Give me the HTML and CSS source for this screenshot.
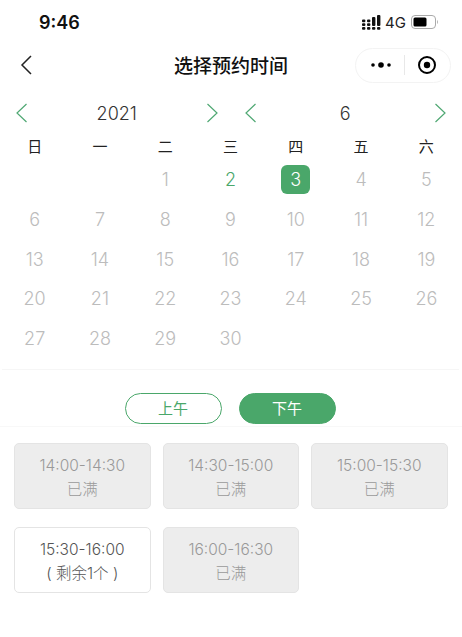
FILE: index.html
```html
<!DOCTYPE html>
<html lang="zh-CN">
<head>
  <meta charset="UTF-8" />
  <meta name="viewport" content="width=device-width, initial-scale=1.0"/>
  <title>选择预约时间</title>
  <link rel="stylesheet" href="styles.css">
</head>
<body>
  <div class="status-bar">
    <div class="time">9:46</div>
    <div class="status-icons">
      <svg class="signal" width="19" height="15" viewBox="0 0 19 15" fill="#111">
        <rect x="0" y="4.5" width="3.4" height="2.8" rx="1"/><rect x="0" y="8.2" width="3.4" height="2.8" rx="1"/><rect x="0" y="12" width="3.4" height="2.8" rx="1"/>
        <rect x="5" y="4.5" width="3.4" height="2.8" rx="1"/><rect x="5" y="8.2" width="3.4" height="2.8" rx="1"/><rect x="5" y="12" width="3.4" height="2.8" rx="1"/>
        <rect x="10" y="2" width="3.4" height="9" rx="1"/><rect x="10" y="12" width="3.4" height="2.8" rx="1"/>
        <rect x="15" y="0" width="3.4" height="11" rx="1"/><rect x="15" y="12" width="3.4" height="2.8" rx="1"/>
      </svg>
      <span class="network">4G</span>
      <svg class="battery" width="28" height="14" viewBox="0 0 28 14">
        <rect x="0.5" y="0.5" width="24" height="13" rx="3.5" fill="none" stroke="#aaa"/>
        <rect x="2.5" y="2.5" width="13" height="9" rx="1.5" fill="#000"/>
        <path d="M26 5 C27.2 5.5 27.2 8.5 26 9 Z" fill="#aaa"/>
      </svg>
    </div>
  </div>

  <div class="nav-bar">
    <svg class="back" width="12" height="20" viewBox="0 0 12 20" fill="none" stroke="#222" stroke-width="1.5">
      <path d="M11 1 L2 10 L11 19"/>
    </svg>
    <div class="nav-title">选择预约时间</div>
    <div class="capsule">
      <svg width="22" height="8" viewBox="0 0 22 8" fill="#000">
        <circle cx="3" cy="4" r="1.8"/><circle cx="11" cy="4" r="2.8"/><circle cx="19" cy="4" r="1.8"/>
      </svg>
      <div class="capsule-line"></div>
      <svg width="20" height="20" viewBox="0 0 20 20">
        <circle cx="10" cy="10" r="8" fill="none" stroke="#000" stroke-width="2"/>
        <circle cx="10" cy="10" r="3.2" fill="#000"/>
      </svg>
    </div>
  </div>

  <div class="picker">
    <div class="picker-part">
      <svg class="arrow" width="11" height="20" viewBox="0 0 11 20"><path d="M10.5 1 L1 10 L10.5 19"/></svg>
      <span>2021</span>
      <svg class="arrow" width="11" height="20" viewBox="0 0 11 20"><path d="M0.5 1 L10 10 L0.5 19"/></svg>
    </div>
    <div class="picker-part">
      <svg class="arrow" width="11" height="20" viewBox="0 0 11 20"><path d="M10.5 1 L1 10 L10.5 19"/></svg>
      <span>6</span>
      <svg class="arrow" width="11" height="20" viewBox="0 0 11 20"><path d="M0.5 1 L10 10 L0.5 19"/></svg>
    </div>
  </div>

  <div class="week">
    <div>日</div><div>一</div><div>二</div><div>三</div><div>四</div><div>五</div><div>六</div>
  </div>

  <div class="days">
    <div></div><div></div>
    <div>1</div><div class="today">2</div><div><span class="selected">3</span></div><div>4</div><div>5</div>
    <div>6</div><div>7</div><div>8</div><div>9</div><div>10</div><div>11</div><div>12</div>
    <div>13</div><div>14</div><div>15</div><div>16</div><div>17</div><div>18</div><div>19</div>
    <div>20</div><div>21</div><div>22</div><div>23</div><div>24</div><div>25</div><div>26</div>
    <div>27</div><div>28</div><div>29</div><div>30</div>
  </div>

  <div class="tabs">
    <div class="tab">上午</div>
    <div class="tab tab-on">下午</div>
  </div>

  <div class="slots">
    <div class="slot full">14:00-14:30<br>已满</div>
    <div class="slot full">14:30-15:00<br>已满</div>
    <div class="slot full">15:00-15:30<br>已满</div>
    <div class="slot">15:30-16:00<br>( 剩余1个 )</div>
    <div class="slot full">16:00-16:30<br>已满</div>
  </div>
</body>
</html>
```

FILE: styles.css
```css
body {
  margin: 0;
  width: 462px;
  height: 637px;
  overflow: hidden;
  background-color: #fff;
  font-family: Inter, "Noto Sans CJK SC", sans-serif;
  color: #333;
}

.status-bar {
  height: 44px;
  padding: 0 23px 0 39px;
  display: flex;
  justify-content: space-between;
  align-items: center;
  box-sizing: border-box;
}

.time {
  font-size: 18px;
  font-weight: 600;
  color: #111;
}

.status-icons {
  display: flex;
  align-items: center;
  gap: 5px;
}

.signal {
  margin-right: -1px;
}

.network {
  font-size: 15px;
  color: #222;
}

.nav-bar {
  height: 42px;
  padding: 0 11px 0 20px;
  display: flex;
  justify-content: space-between;
  align-items: center;
  position: relative;
}

.nav-title {
  position: absolute;
  left: 0;
  right: 0;
  top: 7px;
  text-align: center;
  font-size: 19px;
  font-weight: 500;
  color: #111;
}

.capsule {
  width: 96px;
  height: 35px;
  box-sizing: border-box;
  border: 1px solid #f3f3f3;
  border-radius: 18px;
  display: flex;
  align-items: center;
  justify-content: space-between;
  padding: 0 13px 0 14px;
}

.capsule-line {
  width: 1px;
  height: 20px;
  background-color: #e8e8e8;
}

.picker {
  margin-top: 12px;
  padding: 0 16px;
  display: flex;
  gap: 27px;
  height: 30px;
}

.picker-part {
  flex: 1;
  display: flex;
  justify-content: space-between;
  align-items: center;
  font-size: 18px;
  font-weight: 300;
  color: #333;
}

.arrow {
  fill: none;
  stroke: #4fa873;
  stroke-width: 1.2;
}

.week,
.days {
  margin: 0 2px;
  width: 457px;
  display: grid;
  grid-template-columns: repeat(7, 1fr);
  text-align: center;
}

.week {
  margin-top: 6px;
  height: 25px;
  line-height: 25px;
  font-size: 15px;
  color: #222;
}

.days {
  grid-auto-rows: 39.7px;
  margin-top: 1px;
  padding-bottom: 11px;
  height: 198px;
  border-bottom: 1px solid #f6f6f6;
  font-size: 18px;
  font-weight: 300;
  color: #bcbcbc;
}

.days div {
  display: flex;
  align-items: center;
  justify-content: center;
}

.days .today {
  color: #4aa76a;
}

.selected {
  width: 29px;
  height: 29px;
  line-height: 29px;
  border-radius: 6px;
  background-color: #4aa76a;
  color: #fff;
}

.tabs {
  margin-top: 23px;
  padding: 0 2px 2px 0;
  display: flex;
  justify-content: center;
  gap: 17px;
  border-bottom: 1px solid #f8f8f8;
}

.tab {
  width: 97px;
  height: 31px;
  line-height: 29px;
  box-sizing: border-box;
  border: 1px solid #4aa76a;
  border-radius: 16px;
  text-align: center;
  font-size: 15px;
  color: #4aa76a;
}

.tab-on {
  background-color: #4aa76a;
  color: #fff;
}

.slots {
  margin-top: 16px;
  padding: 0 14px;
  display: grid;
  grid-template-columns: repeat(3, 136.5px);
  column-gap: 12px;
  row-gap: 18px;
}

.slot {
  height: 66px;
  box-sizing: border-box;
  border: 1px solid #e4e4e4;
  border-radius: 5px;
  padding-top: 10px;
  text-align: center;
  font-size: 15.5px;
  font-weight: 300;
  line-height: 24px;
  color: #555;
}

.full {
  background-color: #ededed;
  color: #999;
}
```
